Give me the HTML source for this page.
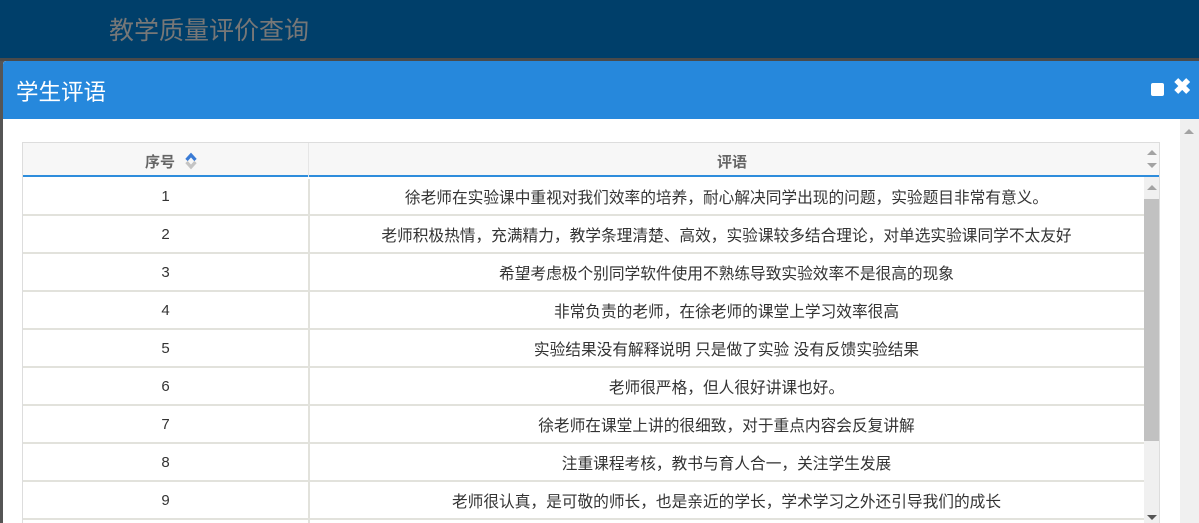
<!DOCTYPE html><html><head><meta charset="utf-8"><style>
*{margin:0;padding:0;box-sizing:border-box}
html,body{width:1199px;height:523px;overflow:hidden}
body{background:#555;font-family:"Liberation Sans","Noto Sans CJK SC",sans-serif;position:relative}
.top{position:absolute;left:0;top:0;width:1199px;height:58px;background:#003f6a}
.top span{position:absolute;left:109px;top:11px;font-size:25px;color:#777}
.line{position:absolute;left:0;top:58px;width:1199px;height:3px;background:#4a4a4a}
.dlg{position:absolute;left:3px;top:61px;width:1196px;height:462px;background:#fff;border-top-left-radius:3px;overflow:hidden}
.hd{position:absolute;left:0;top:0;width:1196px;height:58px;background:#2688dc;border-top-left-radius:3px}
.hd span{position:absolute;left:13px;top:14px;font-size:22.5px;color:#fff}
.sq{position:absolute;left:1148px;top:22px;width:13px;height:13px;background:#fff;border-radius:2px}
.x{position:absolute;left:1170px;top:13px;color:#fff;font-size:22px;font-weight:bold}
.osb{position:absolute;left:1177px;top:58px;width:19px;height:404px;background:#f0f0f0}
.tbl{position:absolute;left:19px;top:81px;width:1138px;height:381px;border:1px solid #ddd;border-bottom:none;overflow:hidden}
.th{position:absolute;left:0;top:0;width:1136px;height:34px;background:#f7f7f7;border-bottom:2px solid #2e8ddc;font-weight:bold;font-size:15px;color:#666}
.th div{position:absolute;top:8px}
.row{position:absolute;left:0;width:1121px;height:38px;border-bottom:2px solid #e2e2dc;font-size:15.7px;color:#333}
.row .a{position:absolute;left:0;width:285px;text-align:center;top:10px;font-size:15px}
.row .b{position:absolute;left:286px;width:835px;text-align:center;top:7px;white-space:nowrap}
.vd{position:absolute;left:285px;top:0;width:2px;height:400px;background:#e2e2dc}
.isb{position:absolute;left:1121px;top:34px;width:15px;height:360px;background:#f0f0f0}
.thumb{position:absolute;left:1121px;top:56px;width:15px;height:242px;background:#c1c1c1}
.tri{position:absolute;width:0;height:0;border-left:5px solid transparent;border-right:5px solid transparent}
</style></head><body>
<div class="top"><span>教学质量评价查询</span></div>
<div class="line"></div>
<div class="dlg">
<div class="hd"><span>学生评语</span><div class="sq"></div><div class="x">✖</div></div>
<div class="osb"><div class="tri" style="left:4px;top:10px;border-bottom:5px solid #a3a3a3"></div></div>
<div class="tbl">
<div class="th"><div style="left:122px">序号</div>
<svg style="position:absolute;left:161px;top:8px" width="14" height="20" viewBox="0 0 14 20"><path d="M2.5 9 L7 4 L11.5 9" fill="none" stroke="#3a7bd5" stroke-width="3.2"/><path d="M2.5 11 L7 16 L11.5 11" fill="none" stroke="#c4c4c4" stroke-width="3.2"/></svg>
<div style="left:694px">评语</div>
<div class="tri" style="left:1124px;top:7px;border-bottom:5px solid #a3a3a3"></div>
<div class="tri" style="left:1124px;top:20px;border-top:5px solid #a3a3a3"></div></div>
<div class="row" style="top:35px"><div class="a">1</div><div class="b">徐老师在实验课中重视对我们效率的培养，耐心解决同学出现的问题，实验题目非常有意义。</div></div>
<div class="row" style="top:73px"><div class="a">2</div><div class="b">老师积极热情，充满精力，教学条理清楚、高效，实验课较多结合理论，对单选实验课同学不太友好</div></div>
<div class="row" style="top:111px"><div class="a">3</div><div class="b">希望考虑极个别同学软件使用不熟练导致实验效率不是很高的现象</div></div>
<div class="row" style="top:149px"><div class="a">4</div><div class="b">非常负责的老师，在徐老师的课堂上学习效率很高</div></div>
<div class="row" style="top:187px"><div class="a">5</div><div class="b">实验结果没有解释说明 只是做了实验 没有反馈实验结果</div></div>
<div class="row" style="top:225px"><div class="a">6</div><div class="b">老师很严格，但人很好讲课也好。</div></div>
<div class="row" style="top:263px"><div class="a">7</div><div class="b">徐老师在课堂上讲的很细致，对于重点内容会反复讲解</div></div>
<div class="row" style="top:301px"><div class="a">8</div><div class="b">注重课程考核，教书与育人合一，关注学生发展</div></div>
<div class="row" style="top:339px"><div class="a">9</div><div class="b">老师很认真，是可敬的师长，也是亲近的学长，学术学习之外还引导我们的成长</div></div>
<div class="vd" style="top:0;height:34px;background:#e6e6e6;width:1px"></div>
<div class="vd" style="top:36px"></div>
<div class="isb"></div><div class="thumb"></div>
<div class="tri" style="left:1124px;top:42px;border-bottom:5px solid #a3a3a3"></div>
<div class="tri" style="left:1124px;top:372px;border-top:5px solid #555"></div>
</div>
</div>
</body></html>
